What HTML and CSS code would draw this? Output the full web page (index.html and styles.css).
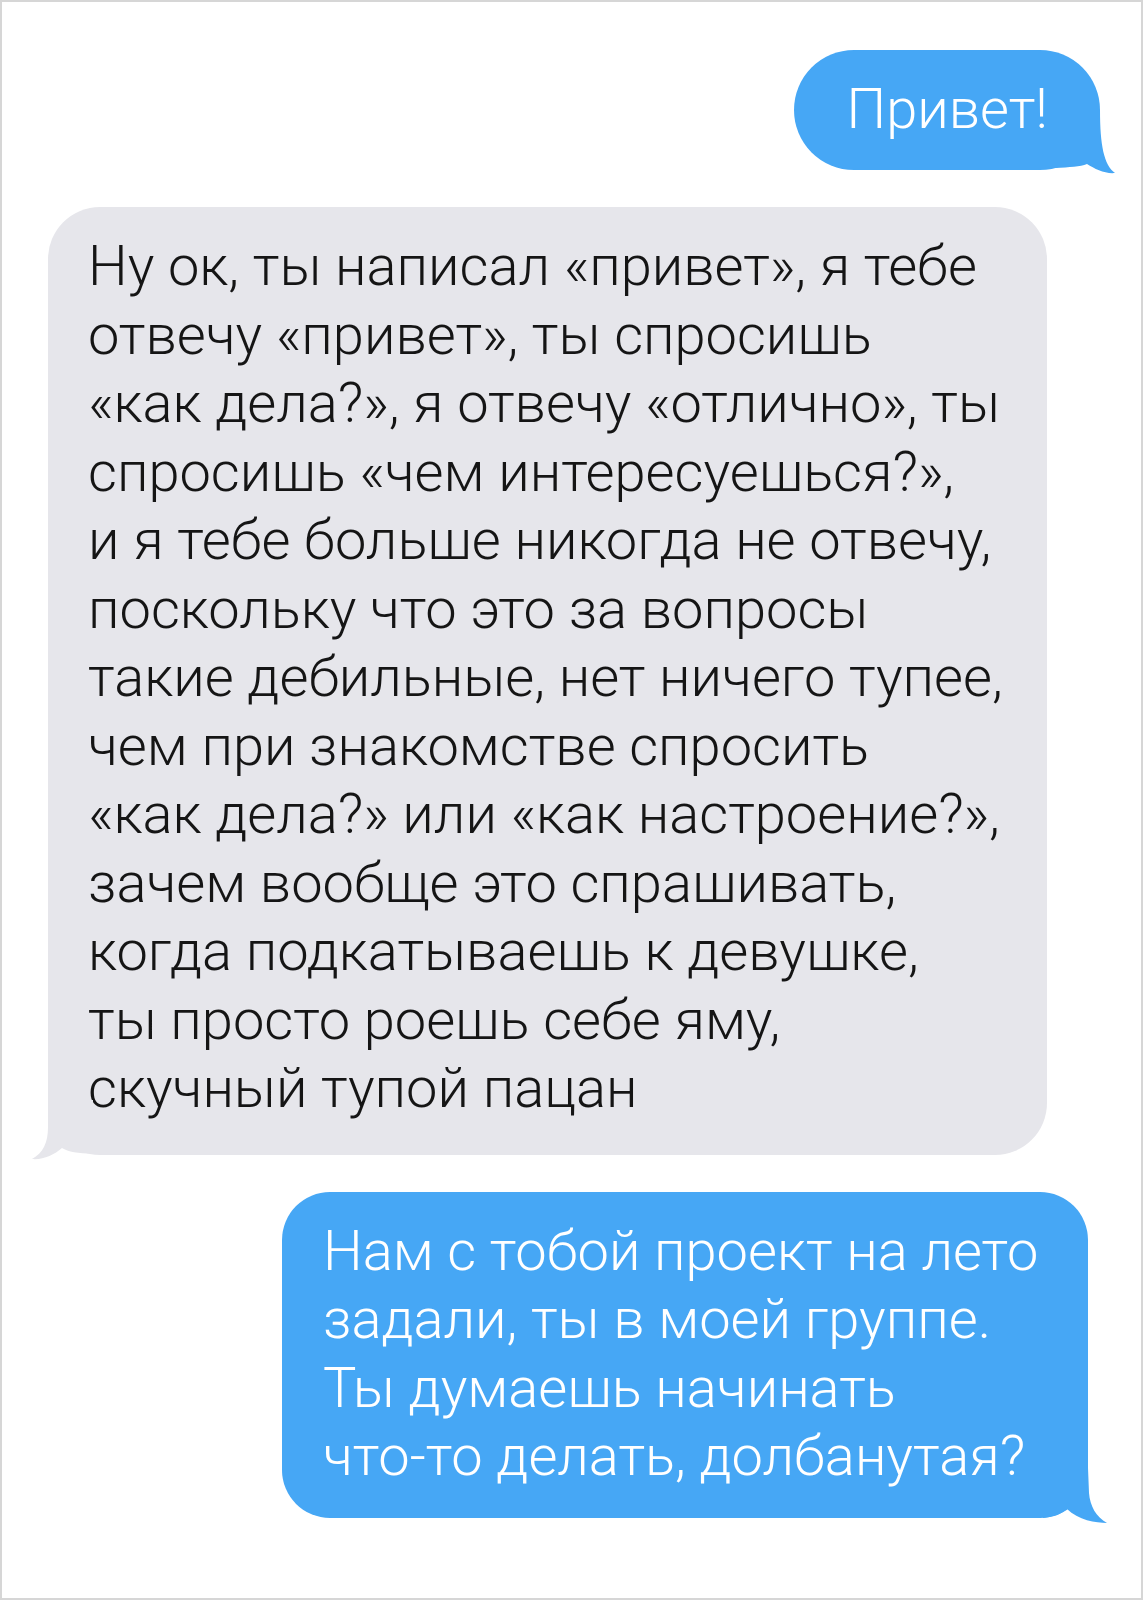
FILE: index.html
```html
<!DOCTYPE html>
<html lang="ru">
<head>
  <meta charset="UTF-8">
  <meta name="viewport" content="width=device-width, initial-scale=1.0">
  <title>Переписка</title>
  <link rel="stylesheet" href="styles.css">
</head>
<body>
  <div class="page">
    <div class="chat">

      <div class="bubble out first">
        Привет!
        <svg class="tail" width="65" height="70" viewBox="-45 -62 65 70">
          <path d="M -45 -60 L 0 -60 C 0 -25, 4 -5, 15 3 C 5 4, -5 -1, -13 -6 C -20 -3, -30 -3, -45 -2 Z"/>
        </svg>
      </div>

      <div class="bubble in">
        Ну ок, ты написал «привет», я тебе<br>
        отвечу «привет», ты спросишь<br>
        «как дела?», я отвечу «отлично», ты<br>
        спросишь «чем интересуешься?»,<br>
        и я тебе больше никогда не отвечу,<br>
        поскольку что это за вопросы<br>
        такие дебильные, нет ничего тупее,<br>
        чем при знакомстве спросить<br>
        «как дела?» или «как настроение?»,<br>
        зачем вообще это спрашивать,<br>
        когда подкатываешь к девушке,<br>
        ты просто роешь себе яму,<br>
        скучный тупой пацан
        <svg class="tail" width="65" height="70" viewBox="-45 -62 65 70">
          <path d="M -45 -55 L 0 -55 L 0 -28 C 0 -12, 5 -2, 16 4 C 5 5, -6 0, -14 -7 C -20 -3, -30 -2, -45 -1 Z"/>
        </svg>
      </div>

      <div class="bubble out last">
        Нам с тобой проект на лето<br>
        задали, ты в моей группе.<br>
        Ты думаешь начинать<br>
        что-то делать, долбанутая?
        <svg class="tail" width="65" height="70" viewBox="-45 -62 65 70">
          <path d="M -45 -50 L 0 -50 L 1 -25 C 2 -12, 8 -1, 19 5 C 8 5, -10 2, -21 -9 C -28 -3, -35 -1, -45 0 Z"/>
        </svg>
      </div>

    </div>
  </div>
</body>
</html>
```

FILE: styles.css
```css
body {
  margin: 0;
  background: #fff;
  font-family: Roboto, "Noto Sans", Arial, sans-serif;
}
.page {
  width: 1143px;
  height: 1600px;
  box-sizing: border-box;
  border: 2px solid #d6d6d6;
  background: #fff;
}
.chat {
  display: flex;
  flex-direction: column;
  gap: 37px;
  padding-top: 48px;
}
.bubble {
  position: relative;
  box-sizing: border-box;
  font-size: 56px;
  font-weight: 300;
  line-height: 68.5px;
  white-space: nowrap;
}

/* tails sit on the bottom corner; the svg origin is the bubble corner */
.bubble .tail {
  position: absolute;
  bottom: -8px;
  overflow: visible;
}
.out {
  align-self: flex-end;
  background: #46a7f5;
  color: #fff;
}
.out .tail {
  right: -20px;
  fill: #46a7f5;
}
.out.first {
  margin-right: 41px;
  height: 120px;
  padding: 25px 52px 0 53px;
  border-radius: 60px;
}
.out.last {
  margin-right: 53px;
  width: 806px;
  padding: 25px 40px 27px 41px;
  border-radius: 48px;
}
.in {
  align-self: flex-start;
  margin-left: 46px;
  width: 999px;
  padding: 25px 40px 32px 40px;
  border-radius: 52px;
  background: #e6e6eb;
  color: #151515;
}
.in .tail {
  left: -20px;
  transform: scaleX(-1);
  fill: #e6e6eb;
}
```
